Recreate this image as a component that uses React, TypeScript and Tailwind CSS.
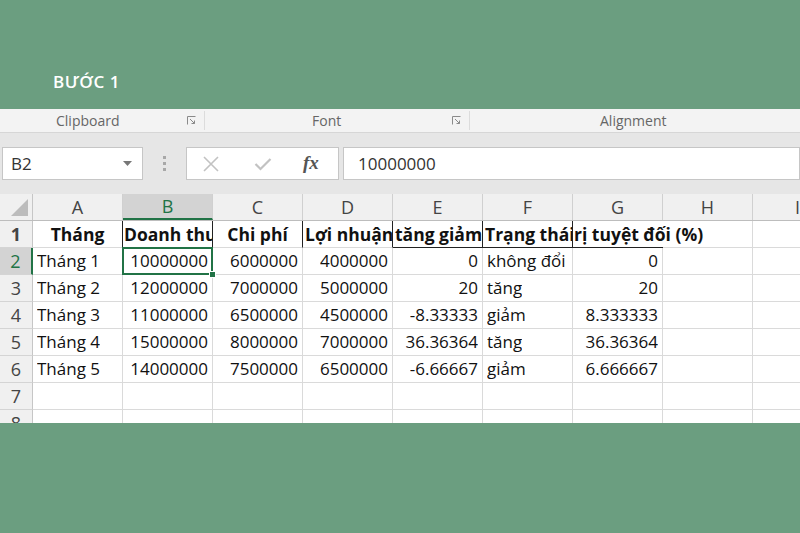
import React from "react";

const cols = ["A", "B", "C", "D", "E", "F", "G", "H", "I"];

type Cell = { t?: string; a?: "l" | "r" | "c" };

const data: Cell[][] = [
  [
    { t: "Tháng 1", a: "l" },
    { t: "10000000", a: "r" },
    { t: "6000000", a: "r" },
    { t: "4000000", a: "r" },
    { t: "0", a: "r" },
    { t: "không đổi", a: "l" },
    { t: "0", a: "r" },
  ],
  [
    { t: "Tháng 2", a: "l" },
    { t: "12000000", a: "r" },
    { t: "7000000", a: "r" },
    { t: "5000000", a: "r" },
    { t: "20", a: "r" },
    { t: "tăng", a: "l" },
    { t: "20", a: "r" },
  ],
  [
    { t: "Tháng 3", a: "l" },
    { t: "11000000", a: "r" },
    { t: "6500000", a: "r" },
    { t: "4500000", a: "r" },
    { t: "-8.33333", a: "r" },
    { t: "giảm", a: "l" },
    { t: "8.333333", a: "r" },
  ],
  [
    { t: "Tháng 4", a: "l" },
    { t: "15000000", a: "r" },
    { t: "8000000", a: "r" },
    { t: "7000000", a: "r" },
    { t: "36.36364", a: "r" },
    { t: "tăng", a: "l" },
    { t: "36.36364", a: "r" },
  ],
  [
    { t: "Tháng 5", a: "l" },
    { t: "14000000", a: "r" },
    { t: "7500000", a: "r" },
    { t: "6500000", a: "r" },
    { t: "-6.66667", a: "r" },
    { t: "giảm", a: "l" },
    { t: "6.666667", a: "r" },
  ],
];

const Launcher = () => (
  <svg width="9" height="9" viewBox="0 0 9 9" className="text-[#8a8a8a]">
    <path d="M0.5 8.5V0.5H8.5" fill="none" stroke="currentColor" />
    <path d="M3 3L7.5 7.5M7.5 4.5V7.5H4.5" fill="none" stroke="currentColor" />
  </svg>
);

const RowHead = ({ n, active }: { n: number; active?: boolean }) => (
  <div
    className={
      "w-[33px] shrink-0 flex items-center justify-center border-b border-[#d4d4d4] text-[18px] " +
      (active
        ? "bg-[#d3d3d3] text-[#217346] border-r-2 border-r-[#217346]"
        : "bg-[#f0f0f0] text-[#444] border-r border-r-[#c6c6c6]")
    }
  >
    {n}
  </div>
);

const DataCell = ({ c, selected }: { c?: Cell; selected?: boolean }) => (
  <div
    className={
      "relative w-[90px] shrink-0 flex items-center whitespace-nowrap border-r border-b border-[#dadada] " +
      (c?.a === "r" ? "justify-end pr-[4px]" : "justify-start pl-[4px]")
    }
  >
    <span className="overflow-hidden">{c?.t}</span>
    {selected && (
      <>
        <div className="absolute left-[-1px] top-[-1px] w-[91px] h-[28px] border-2 border-[#217346] z-10" />
        <div className="absolute right-[-4px] bottom-[-4px] w-[7px] h-[7px] bg-[#217346] border border-white z-20" />
      </>
    )}
  </div>
);

export default function App() {
  return (
    <div className="w-[800px] h-[533px] overflow-hidden bg-[#6b9e80] flex flex-col">
      <div className="h-[109px] shrink-0 pl-[53px] pt-[71px]">
        <div
          className="text-white text-[17px] font-semibold leading-[22px] tracking-[0.5px]"
          style={{ fontFamily: '"Open Sans", sans-serif' }}
        >
          BƯỚC 1
        </div>
      </div>

      <div
        className="h-[314px] shrink-0 bg-white flex flex-col overflow-hidden"
        style={{ fontFamily: '"Open Sans", sans-serif' }}
      >
        {/* ribbon group labels */}
        <div className="h-[24px] shrink-0 bg-[#f3f3f3] border-b border-[#d6d6d6] flex text-[14px] text-[#666]">
          <div className="w-[205px] flex items-center border-r border-[#dcdcdc] my-[2px]">
            <span className="ml-[56px]">Clipboard</span>
            <span className="ml-auto mr-[8px]">
              <Launcher />
            </span>
          </div>
          <div className="w-[265px] flex items-center border-r border-[#dcdcdc] my-[2px]">
            <span className="ml-[107px]">Font</span>
            <span className="ml-auto mr-[8px]">
              <Launcher />
            </span>
          </div>
          <div className="flex-1 flex items-center">
            <span className="ml-[130px]">Alignment</span>
          </div>
        </div>

        {/* formula bar */}
        <div className="shrink-0 bg-[#e6e6e6] pt-[14px] pb-[14px]">
          <div className="h-[33px] flex">
            <div className="ml-[2px] w-[141px] bg-white border border-[#c6c6c6] flex items-center px-[8px] text-[17px] text-[#333]">
              B2
              <svg width="9" height="5" viewBox="0 0 9 5" className="ml-auto mr-[2px]">
                <path d="M0 0H9L4.5 5Z" fill="#777" />
              </svg>
            </div>
            <div className="w-[43px] flex flex-col items-center justify-center gap-[3px]">
              <span className="w-[3px] h-[3px] bg-[#a8a8a8]" />
              <span className="w-[3px] h-[3px] bg-[#a8a8a8]" />
              <span className="w-[3px] h-[3px] bg-[#a8a8a8]" />
            </div>
            <div className="w-[153px] bg-white border border-[#c6c6c6] flex items-center">
              <svg width="18" height="18" viewBox="0 0 18 18" className="ml-[15px]">
                <path d="M2 2L16 16M16 2L2 16" stroke="#c2c2c2" strokeWidth="1.6" />
              </svg>
              <svg width="18" height="14" viewBox="0 0 18 14" className="ml-[34px]">
                <path d="M1.5 7L6.5 12L16.5 2" fill="none" stroke="#c2c2c2" strokeWidth="2.2" />
              </svg>
              <span
                className="ml-[31px] text-[19px] italic text-[#555] font-bold"
                style={{ fontFamily: '"Liberation Serif", serif' }}
              >
                fx
              </span>
            </div>
            <div className="ml-[4px] flex-1 bg-white border border-[#c6c6c6] flex items-center pl-[14px] text-[17px] text-[#333]">
              10000000
            </div>
          </div>
        </div>

        {/* column headers */}
        <div className="h-[27px] shrink-0 flex bg-[#f0f0f0] border-b border-[#bdbdbd] text-[18px] text-[#444]">
          <div className="w-[33px] shrink-0 border-r border-[#c6c6c6] relative">
            <svg width="17" height="17" viewBox="0 0 17 17" className="absolute right-[4px] bottom-[4px]">
              <path d="M17 0V17H0Z" fill="#bcbcbc" />
            </svg>
          </div>
          {cols.map((c) => (
            <div
              key={c}
              className={
                "w-[90px] shrink-0 flex items-center justify-center border-r border-[#d0d0d0] " +
                (c === "B" ? "bg-[#d3d3d3] text-[#217346] border-b-2 border-b-[#217346]" : "")
              }
            >
              {c}
            </div>
          ))}
        </div>

        {/* grid */}
        <div className="flex-1 flex flex-col text-[17px] text-[#111]">
          <div className="h-[27px] shrink-0 flex font-bold text-[17.5px]">
            <RowHead n={1} />
            <div className="w-[90px] shrink-0 flex items-center justify-center border-r border-r-[#222] border-b border-b-[#dadada]">
              Tháng
            </div>
            <div className="w-[90px] shrink-0 flex items-center overflow-hidden whitespace-nowrap pl-[1px] border-r border-r-[#222] border-b border-b-[#dadada]">
              Doanh thu
            </div>
            <div className="w-[90px] shrink-0 flex items-center justify-center border-r border-r-[#222] border-b border-b-[#dadada]">
              Chi phí
            </div>
            <div className="w-[90px] shrink-0 flex items-center overflow-hidden whitespace-nowrap pl-[2px] border-r border-r-[#222] border-b border-b-[#dadada]">
              Lợi nhuận
            </div>
            <div className="w-[90px] shrink-0 flex items-center overflow-hidden whitespace-nowrap pl-[2px] border-r border-b border-[#222]">
              tăng giảm
            </div>
            <div className="w-[90px] shrink-0 flex items-center overflow-hidden whitespace-nowrap pl-[2px] border-r border-b border-[#222]">
              Trạng thái
            </div>
            <div className="relative w-[90px] shrink-0 flex items-center whitespace-nowrap border-b border-[#222] z-10">
              <span className="ml-[1px]">rị tuyệt đối (%)</span>
            </div>
            <div className="w-[90px] shrink-0 border-r border-b border-[#dadada]" />
            <div className="w-[90px] shrink-0 border-r border-b border-[#dadada]" />
          </div>
          {data.map((row, i) => (
            <div key={i} className="h-[27px] shrink-0 flex">
              <RowHead n={i + 2} active={i === 0} />
              {cols.map((c, j) => (
                <DataCell key={c} c={row[j]} selected={i === 0 && j === 1} />
              ))}
            </div>
          ))}
          {[7, 8].map((n) => (
            <div key={n} className="h-[27px] shrink-0 flex">
              <RowHead n={n} />
              {cols.map((c) => (
                <DataCell key={c} />
              ))}
            </div>
          ))}
        </div>
      </div>
    </div>
  );
}
